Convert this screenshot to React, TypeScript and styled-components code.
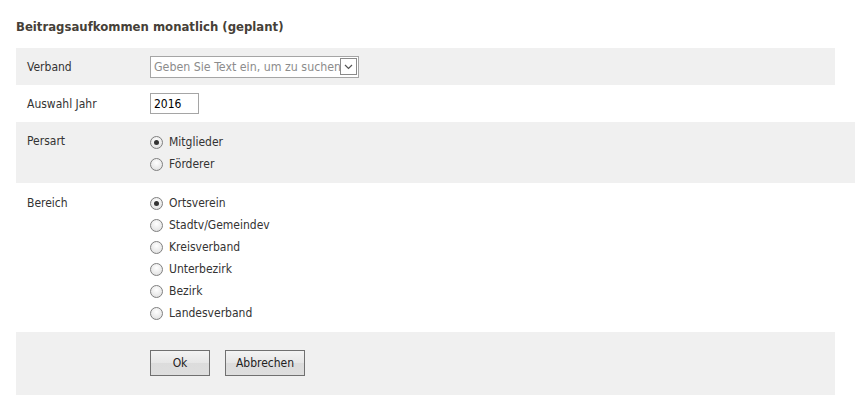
import React from "react";
import styled, { createGlobalStyle } from "styled-components";

const GlobalStyle = createGlobalStyle`
  body {
    margin: 0;
    background: #fff;
    font-family: "DejaVu Sans Condensed", "Liberation Sans", sans-serif;
    font-size: 12px;
    color: #333;
  }
`;

const Page = styled.div`
  width: 819px;
  padding: 0 0 0 16px;
`;

const Title = styled.h2`
  margin: 0;
  padding: 19px 0 0;
  height: 29px;
  font-size: 13px;
  font-weight: bold;
  color: #463f38;
  line-height: 16px;
`;

const Row = styled.div<{ $shaded?: boolean; $wide?: boolean; $align?: string }>`
  display: grid;
  grid-template-columns: 134px 1fr;
  align-items: ${(p) => p.$align || "center"};
  background: ${(p) => (p.$shaded ? "#f0f0f0" : "transparent")};
  margin-right: ${(p) => (p.$wide ? "-20px" : "0")};
`;

const Label = styled.div<{ $top?: number }>`
  padding: ${(p) => (p.$top !== undefined ? `${p.$top}px` : "0")} 0 0 11px;
  color: #333;
`;

const Value = styled.div<{ $pad?: string }>`
  padding: ${(p) => p.$pad || "0"};
  display: flex;
  flex-direction: column;
`;

const Combo = styled.div`
  width: 207px;
  height: 20px;
  border: 1px solid #a5a5a5;
  background: #fff;
  display: flex;
  align-items: center;
  overflow: hidden;
`;

const ComboInput = styled.input`
  flex: 1;
  min-width: 0;
  border: none;
  outline: none;
  padding: 0 0 0 3px;
  font: inherit;
  font-size: 12.3px;
  color: #333;
  background: transparent;
  &::placeholder {
    color: #8c8c8c;
  }
`;

const ComboButton = styled.div`
  width: 15px;
  height: 15px;
  border: 1px solid #8a8a8a;
  margin-right: 1px;
  display: flex;
  align-items: center;
  justify-content: center;
  background: #fff;
`;

const YearInput = styled.input`
  width: 44px;
  height: 19px;
  border: 1px solid #a5a5a5;
  padding: 0 0 0 3px;
  font: inherit;
  font-size: 12px;
  color: #000;
  outline: none;
  box-sizing: content-box;
`;

const RadioLine = styled.label`
  display: flex;
  align-items: center;
  height: 22px;
  gap: 6px;
  color: #333;
`;

const Radio = styled.input`
  appearance: none;
  margin: 0;
  width: 13px;
  height: 13px;
  border-radius: 50%;
  border: 1px solid #7f7f7f;
  background: radial-gradient(circle at 50% 35%, #fff 0%, #e6e6e6 70%, #d4d4d4 100%);
  box-sizing: border-box;
  display: grid;
  place-items: center;
  &:checked::after {
    content: "";
    width: 5px;
    height: 5px;
    border-radius: 50%;
    background: #333;
  }
`;

const Buttons = styled.div`
  display: flex;
  gap: 15px;
  padding: 18px 0 19px;
`;

const Button = styled.button<{ $w: number }>`
  width: ${(p) => p.$w}px;
  height: 26px;
  border: 1px solid #707070;
  border-radius: 0;
  background: linear-gradient(#f3f3f3, #e6e6e6 50%, #dcdcdc 51%, #dedede);
  font: inherit;
  font-size: 12px;
  color: #222;
  padding: 0;
`;

const Chevron = () => (
  <svg width="9" height="6" viewBox="0 0 9 6">
    <path d="M1 1l3.5 3.5L8 1" fill="none" stroke="#555" strokeWidth="1.2" />
  </svg>
);

const persart = ["Mitglieder", "Förderer"];
const bereich = [
  "Ortsverein",
  "Stadtv/Gemeindev",
  "Kreisverband",
  "Unterbezirk",
  "Bezirk",
  "Landesverband",
];

export default function App() {
  return (
    <>
      <GlobalStyle />
      <Page>
        <Title>Beitragsaufkommen monatlich (geplant)</Title>
        <Row $shaded style={{ height: 37 }}>
          <Label>Verband</Label>
          <Value>
            <Combo>
              <ComboInput placeholder="Geben Sie Text ein, um zu suchen" />
              <ComboButton>
                <Chevron />
              </ComboButton>
            </Combo>
          </Value>
        </Row>
        <Row style={{ height: 37 }}>
          <Label>Auswahl Jahr</Label>
          <Value>
            <YearInput defaultValue="2016" />
          </Value>
        </Row>
        <Row $shaded $wide $align="start">
          <Label $top={12}>Persart</Label>
          <Value $pad="9px 0 8px">
            {persart.map((p, i) => (
              <RadioLine key={p}>
                <Radio type="radio" name="persart" defaultChecked={i === 0} />
                {p}
              </RadioLine>
            ))}
          </Value>
        </Row>
        <Row $align="start">
          <Label $top={13}>Bereich</Label>
          <Value $pad="9px 0 8px">
            {bereich.map((b, i) => (
              <RadioLine key={b}>
                <Radio type="radio" name="bereich" defaultChecked={i === 0} />
                {b}
              </RadioLine>
            ))}
          </Value>
        </Row>
        <Row $shaded>
          <div />
          <Buttons>
            <Button $w={60}>Ok</Button>
            <Button $w={80}>Abbrechen</Button>
          </Buttons>
        </Row>
      </Page>
    </>
  );
}
